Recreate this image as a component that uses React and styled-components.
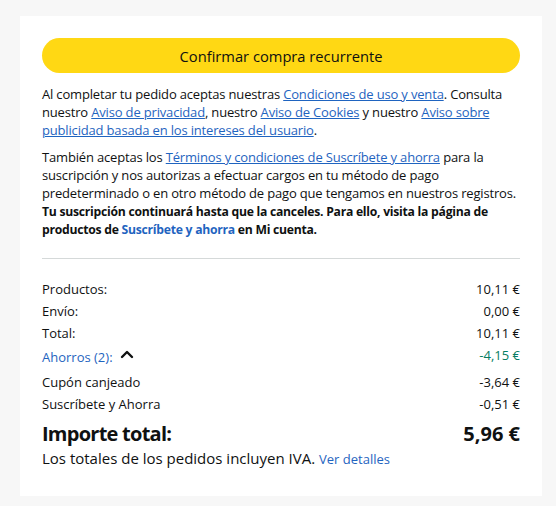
import React from "react";
import styled, { createGlobalStyle } from "styled-components";

const Global = createGlobalStyle`
  html, body { margin: 0; padding: 0; background: #f7f7f7; }
  body { font-family: "Open Sans", "Noto Sans", "Liberation Sans", Arial, sans-serif; color: #0f1111; }
`;

const LINK = "#1f64c0";

const Page = styled.div`
  padding: 16px 14px 10px 20px;
`;

const Card = styled.div`
  background: #fff;
  width: 522px;
  box-sizing: border-box;
  padding: 22px 22px 27px;
`;

const Button = styled.button`
  display: block;
  width: 100%;
  height: 35px;
  border: none;
  border-radius: 18px;
  background: #ffd814;
  color: #0f1111;
  font-family: inherit;
  font-size: 14.7px;
  cursor: pointer;
  margin-bottom: 12px;
`;

const Para = styled.p`
  margin: 0 0 ${(p) => p.$mb || 0}px;
  font-size: 13px;
  letter-spacing: -0.17px;
  line-height: 18px;
`;

const Link = styled.a`
  color: ${LINK};
  text-decoration: ${(p) => (p.$plain ? "none" : "underline")};
  cursor: pointer;
`;

const Strong = styled.b`
  font-weight: 700;
  font-size: 12.2px;
  line-height: 14px;
  letter-spacing: -0.26px;
`;

const Divider = styled.hr`
  border: none;
  border-top: 1px solid #d5d9d9;
  margin: 20px 0 21px;
`;

const Rows = styled.div`
  display: flex;
  flex-direction: column;
  gap: 4px;
`;

const Row = styled.div`
  display: flex;
  justify-content: space-between;
  align-items: ${(p) => (p.$top ? "flex-start" : "center")};
  font-size: 13px;
  line-height: 18px;
`;

const Value = styled.span`
  color: ${(p) => (p.$green ? "#067d62" : "#0f1111")};
`;

const Toggle = styled.span`
  display: inline-flex;
  align-items: center;
  gap: 7px;
  color: ${LINK};
  padding-top: 2px;
  margin-bottom: 3px;
`;

const Chevron = styled.svg`
  margin-bottom: 6px;
`;

const TotalRow = styled.div`
  display: flex;
  justify-content: space-between;
  align-items: baseline;
  font-size: 20px;
  font-weight: 700;
  line-height: 26px;
  margin-top: 8px;
`;

const TotalLabel = styled.span`
  letter-spacing: -0.75px;
`;

const Note = styled.div`
  font-size: 15px;
  line-height: 20px;
  margin-top: 1px;
`;

const SmallLink = styled(Link)`
  font-size: 13px;
`;

export default function App() {
  return (
    <>
      <Global />
      <Page>
        <Card>
          <Button>Confirmar compra recurrente</Button>
          <Para $mb={9}>
            Al completar tu pedido aceptas nuestras{" "}
            <Link>Condiciones de uso y venta</Link>. Consulta nuestro{" "}
            <Link>Aviso de privacidad</Link>, nuestro{" "}
            <Link>Aviso de Cookies</Link> y nuestro{" "}
            <Link>Aviso sobre publicidad basada en los intereses del usuario</Link>.
          </Para>
          <Para>
            También aceptas los{" "}
            <Link>Términos y condiciones de Suscríbete y ahorra</Link> para la
            suscripción y nos autorizas a efectuar cargos en tu método de pago
            predeterminado o en otro método de pago que tengamos en nuestros
            registros.{" "}
            <Strong>
              Tu suscripción continuará hasta que la canceles. Para ello, visita
              la página de productos de <Link $plain>Suscríbete y ahorra</Link> en
              Mi cuenta.
            </Strong>
          </Para>
          <Divider />
          <Rows>
            <Row>
              <span>Productos:</span>
              <Value>10,11 €</Value>
            </Row>
            <Row>
              <span>Envío:</span>
              <Value>0,00 €</Value>
            </Row>
            <Row>
              <span>Total:</span>
              <Value>10,11 €</Value>
            </Row>
            <Row $top>
              <Toggle>
                Ahorros (2):
                <Chevron width="14" height="10" viewBox="0 0 14 10">
                  <path d="M2 8 L7 3 L12 8" fill="none" stroke="#0f1111" strokeWidth="2.4" strokeLinecap="round" strokeLinejoin="round" />
                </Chevron>
              </Toggle>
              <Value $green>-4,15 €</Value>
            </Row>
            <Row>
              <span>Cupón canjeado</span>
              <Value>-3,64 €</Value>
            </Row>
            <Row>
              <span>Suscríbete y Ahorra</span>
              <Value>-0,51 €</Value>
            </Row>
          </Rows>
          <TotalRow>
            <TotalLabel>Importe total:</TotalLabel>
            <span>5,96 €</span>
          </TotalRow>
          <Note>
            Los totales de los pedidos incluyen IVA.{" "}
            <SmallLink $plain>Ver detalles</SmallLink>
          </Note>
        </Card>
      </Page>
    </>
  );
}
